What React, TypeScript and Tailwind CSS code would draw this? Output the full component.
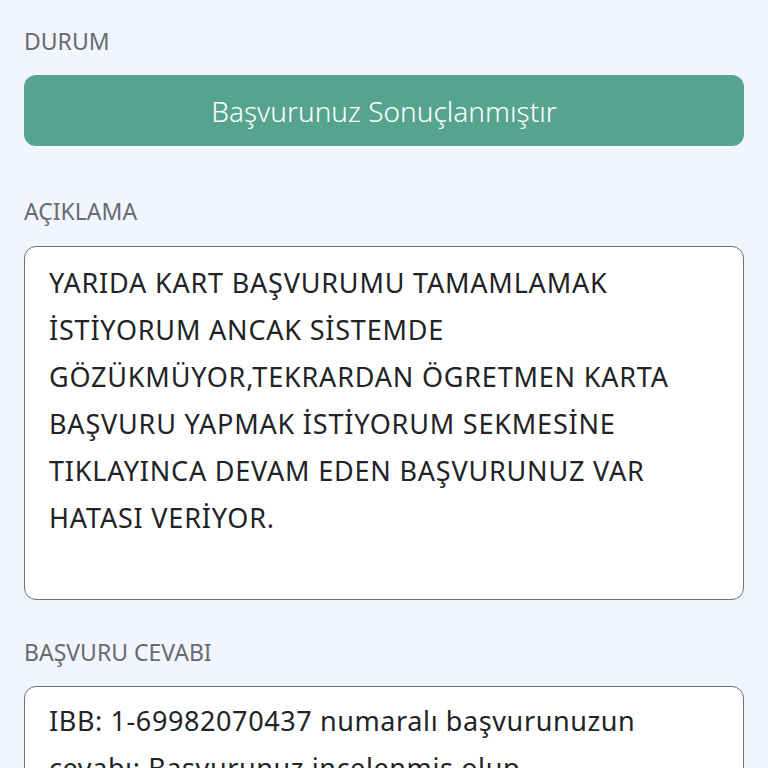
import React from 'react';

const font = { fontFamily: '"Noto Sans", "Open Sans", sans-serif' };

const descriptionLines = [
  'YARIDA KART BAŞVURUMU TAMAMLAMAK',
  'İSTİYORUM ANCAK SİSTEMDE',
  'GÖZÜKMÜYOR,TEKRARDAN ÖGRETMEN KARTA',
  'BAŞVURU YAPMAK İSTİYORUM SEKMESİNE',
  'TIKLAYINCA DEVAM EDEN BAŞVURUNUZ VAR',
  'HATASI VERİYOR.',
];

const answerLines = [
  'IBB: 1-69982070437 numaralı başvurunuzun',
  'cevabı: Başvurunuz incelenmiş olup',
  'talebiniz sonuçlandırılmıştır.',
];

const Label = ({ children, className = '' }: { children: React.ReactNode; className?: string }) => (
  <div className={`text-[23px] leading-[30px] text-[#676b70] ${className}`}>{children}</div>
);

const TextBox = ({
  lines,
  className = '',
  tracking = 'tracking-[0.8px]',
}: {
  lines: string[];
  className?: string;
  tracking?: string;
}) => (
  <div className={`rounded-xl border-[1.5px] border-[#707276] bg-white pl-6 pr-4 ${className}`}>
    {lines.map(line => (
      <div key={line} className={`whitespace-nowrap text-[27px] leading-[47px] text-[#222326] ${tracking}`}>
        {line}
      </div>
    ))}
  </div>
);

export default function App() {
  return (
    <div className="min-h-screen overflow-hidden bg-[#f1f5fd] px-6 pt-[26px]" style={font}>
      <div className="h-[742px] overflow-hidden">
        <Label>DURUM</Label>
        <div className="mt-[19px] flex h-[71px] items-center justify-center rounded-xl bg-[#56a48e]">
          <span className="text-[28px] font-light text-white">Başvurunuz Sonuçlanmıştır</span>
        </div>

        <Label className="mt-[50px]">AÇIKLAMA</Label>
        <TextBox lines={descriptionLines} className="mt-[20px] h-[354px] pt-3" />

        <Label className="mt-[37px]">BAŞVURU CEVABI</Label>
        <TextBox lines={answerLines} className="mt-[19px] pt-[10px]" tracking="tracking-[0.6px]" />
      </div>
    </div>
  );
}
